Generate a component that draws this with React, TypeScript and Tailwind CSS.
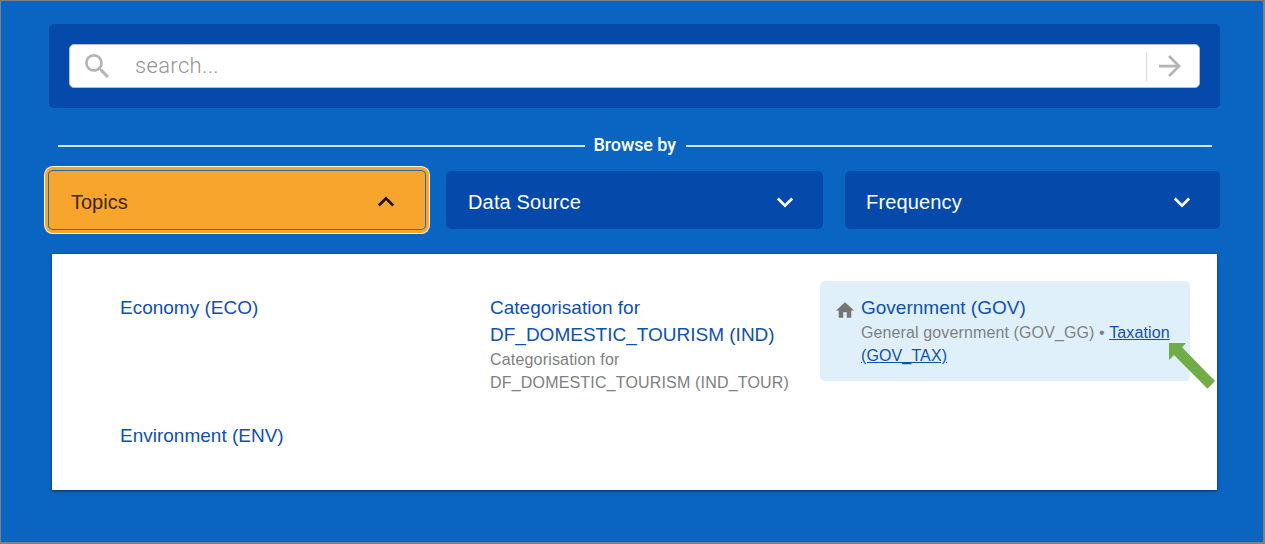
import type { ReactNode } from 'react';

function Chevron({ up = false }: { up?: boolean }) {
  return (
    <svg viewBox="0 0 18 12" className="h-3 w-[18px] shrink-0" fill="none" stroke="currentColor" strokeWidth="2.7">
      <path d={up ? 'M1.800 9.500 9 2.300l7.200 7.200' : 'M1.800 2.500 9 9.700l7.200-7.200'} />
    </svg>
  );
}

function Rule() {
  return <div className="mt-[2px] h-[2px] flex-1 bg-[#d3e4f5]" />;
}

function Facet({ label, className }: { label: string; className: string }) {
  return (
    <button
      type="button"
      className={`flex h-[58px] items-center justify-between rounded-[5px] bg-[#0549ab] pt-1 text-[20px] text-white ${className}`}
    >
      <span className="tracking-[0.16px]">{label}</span>
      <Chevron />
    </button>
  );
}

function Topic({ title, children }: { title: ReactNode; children?: ReactNode }) {
  return (
    <div>
      <a className="block text-[19px] leading-[27px] text-[#0f50b0]">{title}</a>
      {children && (
        <div className="whitespace-nowrap text-[16px] leading-[23px] text-[#808080]">{children}</div>
      )}
    </div>
  );
}

export default function App() {
  return (
    <div className="h-[544px] w-[1265px] overflow-hidden border-2 border-t-1 border-l-1 border-[#7d8087] bg-[#0a65c2] font-['Liberation_Sans',Arial,sans-serif]">
      <div className="ml-12 flex w-[1171px] flex-col pt-[23px]">
        <div className="h-[84px] rounded-[5px] bg-[#0549ab] px-5 pt-5">
          <div className="flex h-[44px] items-center rounded-[5px] border border-[#b9bdc6] bg-white pl-[15px] pr-[18px] text-[#b4b4b4]">
            <svg viewBox="3 3 17.500 17.500" className="h-[24px] w-[24px]" fill="currentColor">
              <path d="M15.500 14h-.79l-.28-.27A6.471 6.471 0 0 0 16 9.500 6.500 6.500 0 1 0 9.500 16c1.610 0 3.090-.59 4.230-1.570l.27.28v.79l5 4.990L20.490 19l-4.990-5zm-6 0C7.010 14 5 11.990 5 9.500S7.010 5 9.500 5 14 7.010 14 9.500 11.990 14 9.500 14z" />
            </svg>
            <span className="ml-[26px] flex-1 pb-[2px] font-['Roboto',sans-serif] text-[22px] font-light tracking-[0.35px] text-[#949494]">search...</span>
            <div className="h-[29px] w-px bg-[#d9d9d9]" />
            <svg viewBox="4 4 16 16" className="ml-3 h-[22px] w-[22px]" fill="currentColor">
              <path d="m12 4-1.410 1.410L16.170 11H4v2h12.170l-5.580 5.590L12 20l8-8z" />
            </svg>
          </div>
        </div>

        <div className="mt-[26px] flex h-[22px] items-center gap-[9px] pl-[9px] pr-2">
          <Rule />
          <span className="w-[83px] whitespace-nowrap font-['Roboto',sans-serif] text-[18px] font-medium leading-[22px] tracking-[-0.1px] text-white">Browse by</span>
          <Rule />
        </div>

        <div className="mt-[15px] flex items-start">
          <button
            type="button"
            className="flex h-[58px] w-[376px] items-center justify-between rounded-[4px] bg-[#f8a52e] pl-[22px] pr-[30px] pt-1 text-[20px] text-[#3a2808] shadow-[0_0_0_1px_#2468ae,0_0_0_4px_#f8a52e,0_0_0_5px_#fff]"
          >
            Topics
            <span className="text-[#1c1305]"><Chevron up /></span>
          </button>
          <Facet label="Data Source" className="ml-[21px] w-[377px] pl-[22px] pr-[29px]" />
          <Facet label="Frequency" className="ml-[22px] w-[375px] pl-[21px] pr-[29px]" />
        </div>

        <div className="ml-[3px] mt-[25px] grid h-[236px] w-[1165px] grid-cols-[370px_330px_370px] grid-rows-[100px_1fr] content-start gap-y-[27px] bg-white pl-[68px] pt-[27px] shadow-[0_1px_3px_rgba(0,0,0,0.5)]">
          <div className="pt-[13px]">
            <Topic title="Economy (ECO)" />
          </div>
          <div className="pt-[13px]">
            <Topic title={<>Categorisation for<br />DF_DOMESTIC_TOURISM (IND)</>}>
              <span className="tracking-[0.18px]">Categorisation for<br />DF_DOMESTIC_TOURISM (IND_TOUR)</span>
            </Topic>
          </div>
          <div className="relative flex rounded-[5px] bg-[#e0f0fb] pl-[16px] pt-[13px]">
            <svg viewBox="2 3 20 17" className="mr-[7px] mt-[8px] h-[16px] w-[18px] shrink-0" fill="#757575">
              <path d="M10 20v-6h4v6h5v-8h3L12 3 2 12h3v8z" />
            </svg>
            <Topic title="Government (GOV)">
              <span className="tracking-[0.12px]">
                General government (GOV_GG) • <a className="text-[#0f50b0] underline">Taxation<br />(GOV_TAX)</a>
              </span>
            </Topic>
            <svg viewBox="0 0 47 47" className="absolute left-[349px] top-[62px] h-[47px] w-[47px]" fill="#70ad47">
              <path d="M0 0h17l-4 4.300L46 38l-7.500 7.800L5 12 0 17z" />
            </svg>
          </div>
          <div className="pt-[14px]">
            <Topic title="Environment (ENV)" />
          </div>
        </div>
      </div>
    </div>
  );
}
